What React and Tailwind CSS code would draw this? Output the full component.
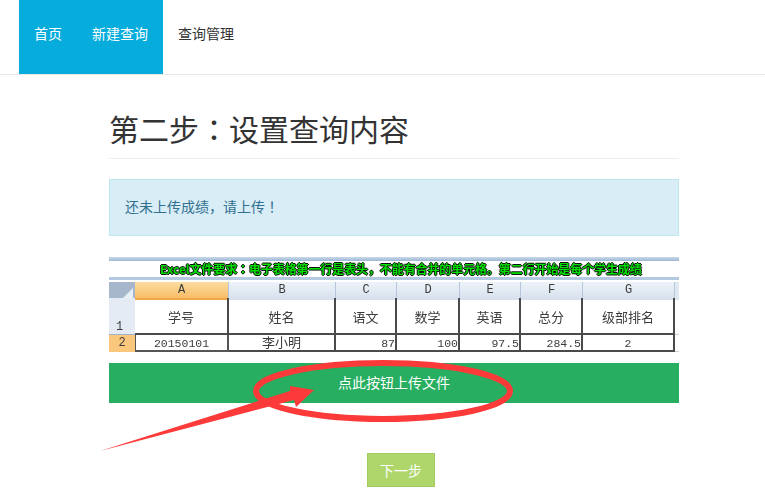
const font = "font-['Microsoft_YaHei','Noto_Sans_CJK_SC','Liberation_Sans',sans-serif]"
const tc = "font-['Noto_Sans_CJK_TC',sans-serif]"

const colWidths = 'grid-cols-[26px_94px_107px_61px_63px_61px_62px_92px_4px]'
const letters = ['A', 'B', 'C', 'D', 'E', 'F', 'G']
const heads = ['学号', '姓名', '语文', '数学', '英语', '总分', '级部排名']
const row = [
  { v: '20150101', c: 'text-center' },
  { v: '李小明', c: 'text-center text-[13px]' },
  { v: '87', c: 'text-right' },
  { v: '100', c: 'text-right' },
  { v: '97.5', c: 'text-right' },
  { v: '284.5', c: 'text-right' },
  { v: '2', c: 'text-center' },
]

function Sheet() {
  return (
    <div className="h-[97px] flex flex-col overflow-hidden text-[#3c3c3c] blur-[0.3px]">
      <div className="h-[2px] bg-white" />
      <div className="h-[4px] bg-gradient-to-b from-[#c9d8e8] to-[#9db8d4]" />
      <div className="h-[16px] bg-white flex items-center pl-[51px] text-[12px] leading-none tracking-[-0.1px] whitespace-nowrap text-[#00e000] font-bold [text-shadow:-1px_0_#111,1px_0_#111,0_-1px_#111,0_1px_#111]">
        Excel文件要求<span className={tc}>：</span>电子表格第一行是表头，不能有合并的单元格。第二行开始是每个学生成绩
      </div>
      <div className="h-[3px] bg-[#b4c8df]" />
      <div className="h-[2px] bg-white" />
      <div className={`grid ${colWidths} h-[16px] text-[12px] leading-[16px] text-center font-['Liberation_Mono',monospace]`}>
        <div className="bg-[#a7b7cb] flex justify-end items-end pr-[2px] pb-[2px]">
          <div className="w-0 h-0 border-l-[10px] border-l-transparent border-b-[10px] border-b-[#e8eef5]" />
        </div>
        {letters.map((l, i) => (
          <div key={l} className={`border-r border-[#b5c6da] ${i === 0 ? 'bg-gradient-to-b from-[#fbdc9f] to-[#f8bd66] border-b-2 border-b-[#f0a94a]' : 'bg-gradient-to-b from-[#eef3f9] to-[#d5e0ec]'}`}>{l}</div>
        ))}
        <div className="bg-[#dfe7f1]" />
      </div>
      <div className={`grid ${colWidths} h-[37px] text-[13px]`}>
        <div className="bg-[#e4ebf5] border-b border-[#9fb2c8] flex items-end pl-[7px] text-[12px] leading-[13px] font-['Liberation_Mono',monospace]">1</div>
        {heads.map(h => (
          <div key={h} className="border-r-2 border-b-2 border-[#4a4a4a] flex items-center justify-center pt-[2px]">{h}</div>
        ))}
        <div className="border-b border-[#cfcfcf]" />
      </div>
      <div className={`grid ${colWidths} grid-rows-[17px] shrink-0 text-[11.5px] leading-[17px] font-['Liberation_Mono','Noto_Sans_CJK_SC',monospace]`}>
        <div className="bg-[#fbc77c] text-center text-[12px]">2</div>
        {row.map((r, i) => (
          <div key={i} className={`${r.c} border-r-2 border-b-2 border-[#4a4a4a] ${i === 0 ? 'border-l border-[#555]' : ''}`}>{r.v}</div>
        ))}
        <div className="border-b border-[#cfcfcf]" />
      </div>
    </div>
  )
}

export default function App() {
  return (
    <div className={`relative h-[502px] bg-white overflow-hidden ${font}`}>
      <nav className="h-[75px] border-b border-[#e7e7e7] pl-[19px] flex text-[14px] leading-[20px]">
        <div className="bg-[#05acdc] flex text-white">
          <a className="px-[15px] pt-[23px]">首页</a>
          <a className="px-[15px] pt-[23px]">新建查询</a>
        </div>
        <a className="px-[15px] pt-[23px] text-[#333]">查询管理</a>
      </nav>

      <main className="ml-[109px] w-[570px]">
        <div className="mt-[32px] h-[52px] border-b border-[#eeeeee]">
          <h1 className="text-[30px] leading-[42px] text-[#333]">第二步<span className={tc}>：</span>设置查询内容</h1>
        </div>
        <div className="mt-[20px] h-[57px] bg-[#d9edf7] border border-[#bce8f1] px-[15px] pt-[16px] text-[14px] leading-[20px] text-[#31708f]">
          还未上传成绩，请上传<span className={tc}>！</span>
        </div>
        <div className="mt-[19px]">
          <Sheet />
        </div>
        <button className="mt-[11px] w-full h-[40px] pb-[2px] bg-[#27ae60] text-white text-[14px] block">
          点此按钮上传文件
        </button>
        <div className="mt-[50px] pl-[258px]">
          <button className="w-[68px] h-[34px] bg-[#aed66b] border border-[#a3cc60] text-white text-[14px]">下一步</button>
        </div>
      </main>

      {/* red annotation drawn over the page */}
      <svg className="absolute inset-0 pointer-events-none" width="765" height="502">
        <ellipse cx="383" cy="391" rx="127" ry="28" fill="none" stroke="#fd3a3a" strokeWidth="6" />
        <polygon points="100,451 290,391 290,386 314,390 296,407 294,400" fill="#fd3a3a" />
      </svg>
    </div>
  )
}
